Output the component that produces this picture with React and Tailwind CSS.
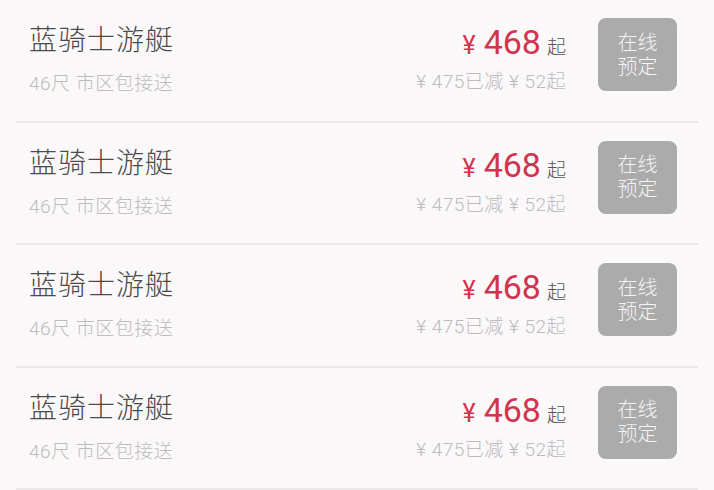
const items = [1, 2, 3, 4].map((id) => ({
  id,
  name: '蓝骑士游艇',
  desc: '46尺 市区包接送',
  price: 468,
  original: 475,
  discount: 52,
}));

const font = { fontFamily: 'Roboto, "Noto Sans CJK SC", sans-serif' };

const YachtRow = ({ item }) => (
  <div className="mx-4 flex h-[122.5px] items-start border-b-2 border-[#e9e7e8] pl-[13px] pr-[21px] font-light">
    <div className="flex flex-1 flex-col pt-[24px]">
      <span className="text-[28px] leading-[34px] tracking-[1px] text-[#4a4a4a]">{item.name}</span>
      <span className="mt-[14px] text-[19px] leading-[24px] tracking-[0.5px] text-[#bdbbbc]">{item.desc}</span>
    </div>
    <div className="flex flex-col items-end pt-[22px]">
      <div className="flex items-baseline leading-[40px] font-normal">
        <span className="text-[25px] text-[#d2344f]">¥</span>
        <span className="ml-[8px] text-[34px] text-[#d2344f]">{item.price}</span>
        <span className="ml-[6px] text-[19px] font-light text-[#555555]">起</span>
      </div>
      <span className="mt-[2px] text-[19px] leading-[24px] tracking-[0.5px] text-[#bdbbbc]">
        ¥ {item.original}已减 ¥ {item.discount}起
      </span>
    </div>
    <button className="ml-[32px] mt-[18px] flex h-[73px] w-[79px] flex-col items-center justify-center rounded-[8px] bg-[#ababab] text-[20px] leading-[24px] text-[#f4f4f4]">
      <span>在线</span>
      <span>预定</span>
    </button>
  </div>
);

export default function App() {
  return (
    <div className="h-[490px] w-full overflow-hidden bg-[#faf8f9]" style={font}>
      {items.map((item) => (
        <YachtRow key={item.id} item={item} />
      ))}
    </div>
  );
}
